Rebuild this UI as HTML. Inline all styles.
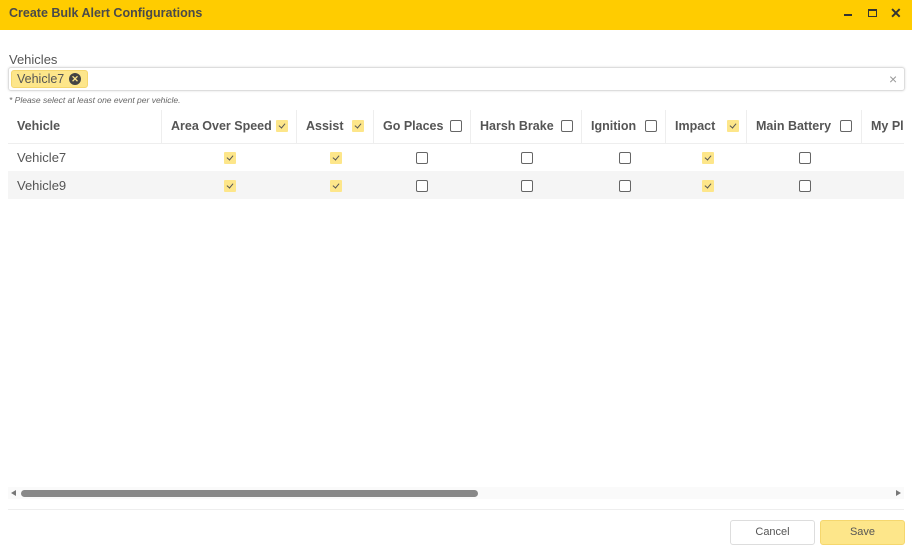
<!DOCTYPE html>
<html><head><style>
*{box-sizing:border-box;margin:0;padding:0}
body{width:912px;height:545px;position:relative;background:#fff;font-family:"Liberation Sans",sans-serif;color:#555;overflow:hidden}
.a{position:absolute}
.cb{position:absolute;width:12px;height:12px;border:1.5px solid #666;border-radius:2px;background:#fff}
.ck{position:absolute;width:12px;height:12px;background:#fde68a;border-radius:1px}
.ck:after{content:"";position:absolute;left:3.5px;top:2px;width:3px;height:5px;border:solid #555;border-width:0 1.3px 1.3px 0;transform:rotate(40deg)}
.h{position:absolute;top:110px;height:33px;line-height:33px;font-weight:bold;font-size:12.5px;color:#555;border-right:1px solid #eee;padding-left:9px;white-space:nowrap;overflow:hidden}
.t{font-size:13px;color:#555}
</style></head><body>
<div class="a" style="left:0;top:0;width:912px;height:30px;background:#ffcc00"></div>
<div class="a" style="left:9px;top:6px;font-size:12.5px;font-weight:bold;color:#4a4a4a">Create Bulk Alert Configurations</div>
<div class="a" style="left:844px;top:14px;width:8px;height:2px;background:#333"></div>
<div class="a" style="left:868px;top:9px;width:9px;height:8px;border:1.5px solid #333;border-top-width:2.5px"></div>
<div class="a" style="left:890px;top:5px;font-size:14px;font-weight:bold;color:#333">✕</div>

<div class="a" style="left:9px;top:52px;font-size:13px;color:#555">Vehicles</div>
<div class="a" style="left:8px;top:67px;width:897px;height:24px;border:1px solid #ddd;border-radius:3px;box-shadow:0 0 2px #ddd"></div>
<div class="a" style="left:11px;top:70px;width:77px;height:18px;background:#fde68a;border:1px solid #f5d76e;border-radius:3px"></div>
<div class="a" style="left:17px;top:72px;font-size:12.5px;color:#555">Vehicle7</div>
<div class="a" style="left:69px;top:73px;width:12px;height:12px;border-radius:50%;background:#444;color:#fde68a;font-size:9px;line-height:12px;text-align:center;font-weight:bold">✕</div>
<div class="a" style="left:889px;top:71px;font-size:14px;color:#999">×</div>
<div class="a" style="left:9px;top:95px;font-size:8.5px;font-style:italic;color:#666">* Please select at least one event per vehicle.</div>

<div class="a" style="left:8px;top:143px;width:896px;height:1px;background:#eee"></div>
<div class="a" style="left:8px;top:171px;width:896px;height:28px;background:#f5f5f5"></div>

<div class="h" style="left:8px;width:154px">Vehicle</div>
<div class="h" style="left:162px;width:135px">Area Over Speed</div>
<div class="h" style="left:297px;width:77px">Assist</div>
<div class="h" style="left:374px;width:97px">Go Places</div>
<div class="h" style="left:471px;width:111px">Harsh Brake</div>
<div class="h" style="left:582px;width:84px">Ignition</div>
<div class="h" style="left:666px;width:81px">Impact</div>
<div class="h" style="left:747px;width:115px">Main Battery</div>
<div class="h" style="left:862px;width:42px;border:none">My Place</div>

<div class="ck" style="left:276px;top:120px"></div>
<div class="ck" style="left:352px;top:120px"></div>
<div class="cb" style="left:450px;top:120px"></div>
<div class="cb" style="left:561px;top:120px"></div>
<div class="cb" style="left:645px;top:120px"></div>
<div class="ck" style="left:727px;top:120px"></div>
<div class="cb" style="left:840px;top:120px"></div>

<div class="a t" style="left:17px;top:150px">Vehicle7</div>
<div class="a t" style="left:17px;top:178px">Vehicle9</div>

<div class="ck" style="left:224px;top:152px"></div>
<div class="ck" style="left:330px;top:152px"></div>
<div class="cb" style="left:416px;top:152px"></div>
<div class="cb" style="left:521px;top:152px"></div>
<div class="cb" style="left:619px;top:152px"></div>
<div class="ck" style="left:702px;top:152px"></div>
<div class="cb" style="left:799px;top:152px"></div>

<div class="ck" style="left:224px;top:180px"></div>
<div class="ck" style="left:330px;top:180px"></div>
<div class="cb" style="left:416px;top:180px"></div>
<div class="cb" style="left:521px;top:180px"></div>
<div class="cb" style="left:619px;top:180px"></div>
<div class="ck" style="left:702px;top:180px"></div>
<div class="cb" style="left:799px;top:180px"></div>

<div class="a" style="left:8px;top:487px;width:896px;height:12px;background:#fafafa"></div>
<div class="a" style="left:11px;top:490px;width:0;height:0;border-top:3px solid transparent;border-bottom:3px solid transparent;border-right:5px solid #777"></div>
<div class="a" style="left:896px;top:490px;width:0;height:0;border-top:3px solid transparent;border-bottom:3px solid transparent;border-left:5px solid #777"></div>
<div class="a" style="left:21px;top:490px;width:457px;height:7px;background:#888;border-radius:4px"></div>
<div class="a" style="left:8px;top:509px;width:896px;height:1px;background:#eee"></div>

<div class="a" style="left:730px;top:520px;width:85px;height:25px;border:1px solid #ddd;border-radius:3px;font-size:11px;line-height:23px;text-align:center;color:#555">Cancel</div>
<div class="a" style="left:820px;top:520px;width:85px;height:25px;background:#fde68a;border:1px solid #f5d76e;border-radius:3px;font-size:11px;line-height:23px;text-align:center;color:#555">Save</div>
</body></html>
